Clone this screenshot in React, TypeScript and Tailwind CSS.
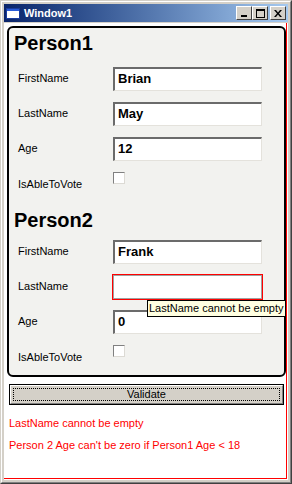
import React from "react";

const font = { fontFamily: '"Liberation Sans", Arial, sans-serif' };

function TextBox({ value, invalid }: { value: string; invalid?: boolean }) {
  if (invalid) {
    return (
      <div className="h-[26px] w-[151px] border border-[#ff0000] bg-white">
        <div className="h-full w-full border border-[#a0a0a0] bg-white" />
      </div>
    );
  }
  return (
    <div className="flex h-[24px] w-[149px] items-center border-t-2 border-l-2 border-r border-b border-t-[#6b6b6b] border-l-[#6b6b6b] border-r-[#e4e2dc] border-b-[#e4e2dc] bg-white pl-[3px] text-[13px] font-bold leading-[16px] text-black">
      {value}
    </div>
  );
}

function Row({ label, children }: { label: string; children: React.ReactNode }) {
  return (
    <div className="flex h-[35px] items-center">
      <div className="w-[104px] pl-[9px] text-[11px] leading-[13px] text-black">{label}</div>
      {children}
    </div>
  );
}

function CheckRow({ last }: { last?: boolean }) {
  return (
    <div className={last ? "flex h-[36px] items-start" : "flex h-[35px] items-start"}>
      <div className="mt-[12px] w-[104px] pl-[9px] text-[11px] leading-[13px] text-black">
        IsAbleToVote
      </div>
      <div className="mt-[6px] h-[12px] w-[12px] border-t border-l border-r border-b border-t-[#808080] border-l-[#808080] border-r-[#dcdad4] border-b-[#dcdad4] bg-white" />
    </div>
  );
}

function Person({
  name,
  first,
  last,
  age,
  top,
  invalidLast,
  end,
}: {
  name: string;
  first: string;
  last: string;
  age: string;
  top: string;
  invalidLast?: boolean;
  end?: boolean;
}) {
  return (
    <div className="flex flex-col">
      <div className={`h-[33px] pl-[5px] text-[20px] font-bold leading-[20px] text-black ${top}`}>
        {name}
      </div>
      <Row label="FirstName">
        <TextBox value={first} />
      </Row>
      <Row label="LastName">
        <div className={invalidLast ? "-ml-[1px]" : ""}>
          <TextBox value={last} invalid={invalidLast} />
        </div>
      </Row>
      <Row label="Age">
        <TextBox value={age} />
      </Row>
      <CheckRow last={end} />
    </div>
  );
}

function TitleButton({ children, className }: { children: React.ReactNode; className?: string }) {
  return (
    <div
      className={`flex h-[14px] w-[16px] items-center justify-center border-t border-l border-r border-b border-t-white border-l-white border-r-[#404040] border-b-[#404040] bg-[#d4d0c8] ${className ?? ""}`}
    >
      {children}
    </div>
  );
}

export default function App() {
  return (
    <div className="h-[484px] w-[292px] overflow-hidden" style={font}>
      <div className="h-full w-full border border-t-[#d4d0c8] border-l-[#d4d0c8] border-r-[#404040] border-b-[#404040]">
        <div className="flex h-full w-full flex-col border border-t-white border-l-white border-r-[#808080] border-b-[#808080] bg-[#d4d0c8] p-[2px]">
          {/* title bar */}
          <div className="flex h-[18px] items-center bg-gradient-to-r from-[#0a246a] to-[#a6caf0]">
            <svg width="14" height="11" viewBox="0 0 14 11" className="ml-[2px]">
              <rect x="0" y="0" width="14" height="11" fill="#ffffff" />
              <rect x="0" y="0" width="14" height="3" fill="#2a5cd8" />
              <rect x="0.5" y="0.5" width="13" height="10" fill="none" stroke="#1a3c9c" />
            </svg>
            <div className="ml-[4px] text-[11px] font-bold leading-[13px] text-white">Window1</div>
            <div className="ml-auto mr-[2px] flex items-center">
              <TitleButton>
                <svg width="8" height="8" viewBox="0 0 8 8">
                  <rect x="1" y="6" width="6" height="2" fill="#000" />
                </svg>
              </TitleButton>
              <TitleButton>
                <svg width="9" height="9" viewBox="0 0 9 9">
                  <rect x="0.5" y="0.5" width="8" height="8" fill="none" stroke="#000" />
                  <rect x="0" y="0" width="9" height="2" fill="#000" />
                </svg>
              </TitleButton>
              <TitleButton className="ml-[2px]">
                <svg width="8" height="7" viewBox="0 0 8 7">
                  <path d="M0 0h2l2 2.5L6 0h2L5 3.5 8 7H6L4 4.5 2 7H0l3-3.5z" fill="#000" />
                </svg>
              </TitleButton>
            </div>
          </div>

          {/* client */}
          <div className="mt-[1px] flex flex-1 bg-white">
            <div className="relative mr-[1px] mb-[1px] flex flex-1 flex-col border-r border-b border-[#ff0000] pl-[3px] pt-[3px]">
              <div className="rounded-[6px] border-2 border-black bg-[#f2f2ef]">
                <Person name="Person1" first="Brian" last="May" age="12" top="pt-[5px]" />
                <Person
                  name="Person2"
                  first="Frank"
                  last=""
                  age="0"
                  top="pt-[9px]"
                  invalidLast
                  end
                />
              </div>

              {/* tooltip */}
              <div className="absolute left-[143px] top-[277px] flex h-[17px] items-center whitespace-nowrap border border-black bg-[#ffffe1] px-[1px] text-[11px] leading-[13px] text-black">
                LastName cannot be empty
              </div>

              <div className="ml-[2px] mt-[7px] h-[21px] w-[275px] border border-black">
                <div className="flex h-full w-full items-center justify-center border-t border-l border-r border-b border-t-white border-l-white border-r-[#808080] border-b-[#808080] bg-[#d4d0c8] p-[2px]">
                  <div className="flex h-full w-full items-center justify-center border border-dotted border-black text-[11px] leading-[13px] text-black">
                    Validate
                  </div>
                </div>
              </div>

              <div className="ml-[2px] mt-[12px] text-[11px] leading-[13px] text-[#ff0000]">
                LastName cannot be empty
              </div>
              <div className="ml-[2px] mt-[9px] text-[11px] leading-[13px] text-[#ff0000]">
                Person 2 Age can't be zero if Person1 Age &lt; 18
              </div>
            </div>
          </div>
        </div>
      </div>
    </div>
  );
}
